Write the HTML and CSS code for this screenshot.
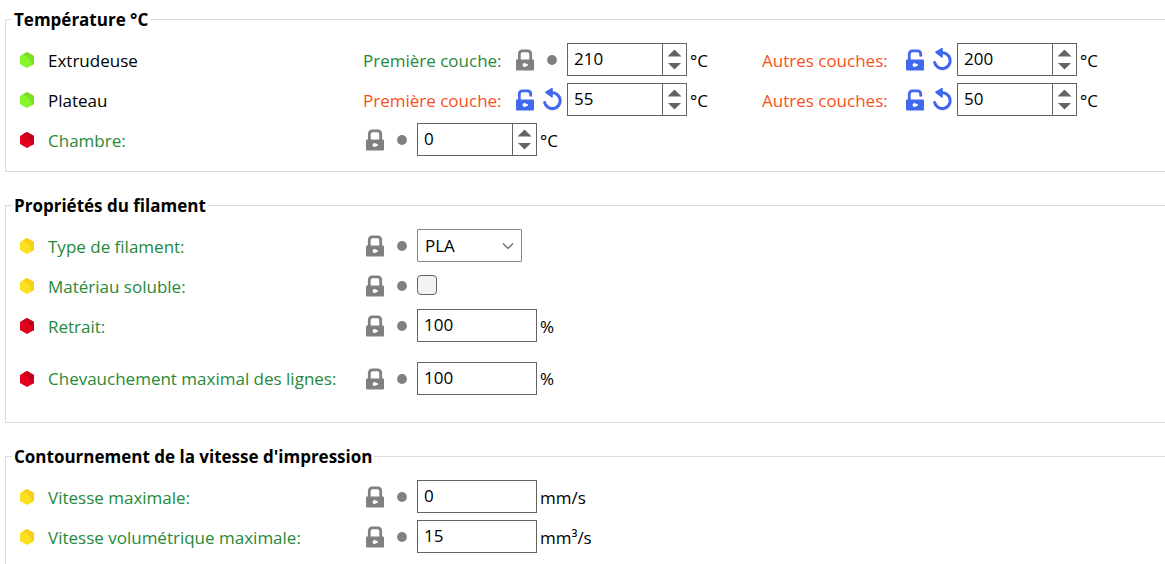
FILE: index.html
```html
<!DOCTYPE html>
<html lang="fr">
<head>
<meta charset="utf-8">
<title>Réglages du filament</title>
<link rel="stylesheet" href="styles.css">
</head>
<body>
<svg class="sprite" aria-hidden="true">
  <symbol id="hex" viewBox="0 0 14 16">
    <path class="hex-base" d="M7 0 14 4V12L7 16 0 12V4Z"/>
    <path class="hex-shade" d="M7 0 14 4V12L11.500 13.400C12 9 8 5 2.500 2.600Z"/>
  </symbol>
  <symbol id="lock" viewBox="0 0 24 24">
    <path d="M6.300 12V6Q6.300 2.900 9.400 2.900H14.600Q17.700 2.900 17.700 6V12" fill="none" stroke="currentColor" stroke-width="2.800"/>
    <rect x="3" y="11.500" width="18" height="11" rx="1" fill="currentColor"/>
    <path d="M11.500 15a2 2 0 1 0 1.300 3.600l2.200-1.100v-1l-2.200-1Z" fill="#fff"/>
  </symbol>
  <symbol id="unlock" viewBox="0 0 24 24">
    <path d="M6.300 12V6Q6.300 2.900 9.400 2.900H14.600Q17.700 2.900 17.700 6V7.400" fill="none" stroke="currentColor" stroke-width="2.800" stroke-linecap="round"/>
    <rect x="3" y="11.500" width="18" height="11" rx="1" fill="currentColor"/>
    <path d="M11.500 15a2 2 0 1 0 1.300 3.600l2.200-1.100v-1l-2.200-1Z" fill="#fff"/>
  </symbol>
  <symbol id="dot" viewBox="0 0 24 24"><circle cx="12" cy="12" r="4.900" fill="currentColor"/></symbol>
  <symbol id="undo" viewBox="0 0 24 24">
    <path d="M4.600 14.500A7.900 7.900 0 1 0 11.500 4.800" fill="none" stroke="currentColor" stroke-width="3.100" stroke-linecap="round"/>
    <path d="M6 4.300 12 .7V8.900Z" fill="currentColor" stroke="currentColor" stroke-width="1.600" stroke-linejoin="round"/>
  </symbol>
</svg>

<main class="settings">
  <fieldset class="group">
    <legend>Température °C</legend>
    <div class="row">
      <svg class="hex simple"><use href="#hex"/></svg>
      <span class="name">Extrudeuse</span>
      <div class="pair">
        <div class="field">
          <label class="sub system" for="ext-first">Première couche:</label>
          <button class="icon" type="button" aria-label="Valeur système"><svg><use href="#lock"/></svg></button>
          <button class="icon" type="button" aria-label="Valeur enregistrée"><svg><use href="#dot"/></svg></button>
          <span class="spin"><input id="ext-first" type="number" value="210"><span class="steps"><button class="up" type="button" aria-label="Augmenter"></button><button class="down" type="button" aria-label="Diminuer"></button></span></span>
          <span class="unit">°C</span>
        </div>
        <div class="field">
          <label class="sub changed" for="ext-other">Autres couches:</label>
          <button class="icon active" type="button" aria-label="Revenir à la valeur système"><svg><use href="#unlock"/></svg></button>
          <button class="icon active" type="button" aria-label="Annuler"><svg><use href="#undo"/></svg></button>
          <span class="spin"><input id="ext-other" type="number" value="200"><span class="steps"><button class="up" type="button" aria-label="Augmenter"></button><button class="down" type="button" aria-label="Diminuer"></button></span></span>
          <span class="unit">°C</span>
        </div>
      </div>
    </div>
    <div class="row">
      <svg class="hex simple"><use href="#hex"/></svg>
      <span class="name">Plateau</span>
      <div class="pair">
        <div class="field">
          <label class="sub changed" for="bed-first">Première couche:</label>
          <button class="icon active" type="button" aria-label="Revenir à la valeur système"><svg><use href="#unlock"/></svg></button>
          <button class="icon active" type="button" aria-label="Annuler"><svg><use href="#undo"/></svg></button>
          <span class="spin"><input id="bed-first" type="number" value="55"><span class="steps"><button class="up" type="button" aria-label="Augmenter"></button><button class="down" type="button" aria-label="Diminuer"></button></span></span>
          <span class="unit">°C</span>
        </div>
        <div class="field">
          <label class="sub changed" for="bed-other">Autres couches:</label>
          <button class="icon active" type="button" aria-label="Revenir à la valeur système"><svg><use href="#unlock"/></svg></button>
          <button class="icon active" type="button" aria-label="Annuler"><svg><use href="#undo"/></svg></button>
          <span class="spin"><input id="bed-other" type="number" value="50"><span class="steps"><button class="up" type="button" aria-label="Augmenter"></button><button class="down" type="button" aria-label="Diminuer"></button></span></span>
          <span class="unit">°C</span>
        </div>
      </div>
    </div>
    <div class="row">
      <svg class="hex expert"><use href="#hex"/></svg>
      <label class="name system" for="chamber">Chambre:</label>
      <div class="field">
        <button class="icon" type="button" aria-label="Valeur système"><svg><use href="#lock"/></svg></button>
        <button class="icon" type="button" aria-label="Valeur enregistrée"><svg><use href="#dot"/></svg></button>
        <span class="spin"><input id="chamber" type="number" value="0"><span class="steps"><button class="up" type="button" aria-label="Augmenter"></button><button class="down" type="button" aria-label="Diminuer"></button></span></span>
        <span class="unit">°C</span>
      </div>
    </div>
  </fieldset>

  <fieldset class="group">
    <legend>Propriétés du filament</legend>
    <div class="row">
      <svg class="hex advanced"><use href="#hex"/></svg>
      <label class="name system" for="type">Type de filament:</label>
      <div class="field">
        <button class="icon" type="button" aria-label="Valeur système"><svg><use href="#lock"/></svg></button>
        <button class="icon" type="button" aria-label="Valeur enregistrée"><svg><use href="#dot"/></svg></button>
        <span class="choice"><select id="type"><option>PLA</option></select><svg class="chevron" viewBox="0 0 12 8" aria-hidden="true"><path d="M1 1.500 6 6.500 11 1.500"/></svg></span>
      </div>
    </div>
    <div class="row">
      <svg class="hex advanced"><use href="#hex"/></svg>
      <label class="name system" for="soluble">Matériau soluble:</label>
      <div class="field">
        <button class="icon" type="button" aria-label="Valeur système"><svg><use href="#lock"/></svg></button>
        <button class="icon" type="button" aria-label="Valeur enregistrée"><svg><use href="#dot"/></svg></button>
        <input class="tick" id="soluble" type="checkbox">
      </div>
    </div>
    <div class="row">
      <svg class="hex expert"><use href="#hex"/></svg>
      <label class="name system" for="shrink">Retrait:</label>
      <div class="field">
        <button class="icon" type="button" aria-label="Valeur système"><svg><use href="#lock"/></svg></button>
        <button class="icon" type="button" aria-label="Valeur enregistrée"><svg><use href="#dot"/></svg></button>
        <input class="box" id="shrink" type="text" value="100">
        <span class="unit">%</span>
      </div>
    </div>
    <div class="row tall">
      <svg class="hex expert"><use href="#hex"/></svg>
      <label class="name system" for="overlap">Chevauchement maximal des lignes:</label>
      <div class="field">
        <button class="icon" type="button" aria-label="Valeur système"><svg><use href="#lock"/></svg></button>
        <button class="icon" type="button" aria-label="Valeur enregistrée"><svg><use href="#dot"/></svg></button>
        <input class="box" id="overlap" type="text" value="100">
        <span class="unit">%</span>
      </div>
    </div>
  </fieldset>

  <fieldset class="group">
    <legend>Contournement de la vitesse d'impression</legend>
    <div class="row">
      <svg class="hex advanced"><use href="#hex"/></svg>
      <label class="name system" for="speed">Vitesse maximale:</label>
      <div class="field">
        <button class="icon" type="button" aria-label="Valeur système"><svg><use href="#lock"/></svg></button>
        <button class="icon" type="button" aria-label="Valeur enregistrée"><svg><use href="#dot"/></svg></button>
        <input class="box" id="speed" type="text" value="0">
        <span class="unit">mm/s</span>
      </div>
    </div>
    <div class="row">
      <svg class="hex advanced"><use href="#hex"/></svg>
      <label class="name system" for="volume">Vitesse volumétrique maximale:</label>
      <div class="field">
        <button class="icon" type="button" aria-label="Valeur système"><svg><use href="#lock"/></svg></button>
        <button class="icon" type="button" aria-label="Valeur enregistrée"><svg><use href="#dot"/></svg></button>
        <input class="box" id="volume" type="text" value="15">
        <span class="unit">mm³/s</span>
      </div>
    </div>
  </fieldset>
</main>
</body>
</html>
```

FILE: styles.css
```css
* { box-sizing: border-box; }

html { overflow: hidden; }

body {
  margin: 0;
  background: #fff;
  color: #000;
  font: 17px/23px "Open Sans", "Noto Sans", sans-serif;
}

.sprite { display: none; }

.settings {
  display: flex;
  flex-direction: column;
  gap: 22px;
  padding: 8px 0 8px 5px;
}

.group {
  min-width: 0;
  margin: 0;
  padding: 9px 0 11px;
  border: 1px solid #dcdcdc;
  border-right: 0;
}

legend {
  margin-left: 6px;
  padding: 0 2px;
  font-weight: 700;
}

.row {
  display: grid;
  grid-template-columns: 28px 315px auto;
  align-items: center;
  min-height: 40px;
  padding-left: 14px;
  white-space: nowrap;
}

.row.tall { min-height: 65px; }

.hex { width: 14px; height: 16px; }
.hex-base { fill: var(--base); }
.hex-shade { fill: var(--shade); }
.simple { --base: #84f72c; --shade: #7edc28; }
.advanced { --base: #fbe01d; --shade: #f8d01b; }
.expert { --base: #e3001f; --shade: #c60018; }

.system { color: #26893a; }
.changed { color: #f94f1c; }

.pair {
  display: grid;
  grid-template-columns: 399px auto;
}

.field {
  display: flex;
  align-items: center;
  gap: 3px;
}

.sub { width: 147px; }
.field + .field .sub { width: 138px; }

button, input, select {
  margin: 0;
  border: 0;
  border-radius: 0;
  background: none;
  color: inherit;
  font: inherit;
}

.icon {
  width: 24px;
  height: 24px;
  padding: 0;
  color: #808080;
}

.icon.active { color: #4169ee; }
.icon svg { display: block; width: 24px; height: 24px; }

.spin, .box, .choice {
  width: 120px;
  height: 33px;
  margin-bottom: 1px;
  border: 1px solid #646464;
  background: #fff;
}

.box, .spin input { padding: 0 6px 2px; }

.spin { display: flex; }

.spin input {
  flex: 1;
  min-width: 0;
  appearance: textfield;
}

.spin input::-webkit-inner-spin-button { appearance: none; margin: 0; }

.steps {
  display: grid;
  grid-template-rows: 1fr 1fr;
  width: 24px;
  border-left: 1px solid #646464;
}

.steps button { display: flex; justify-content: center; padding: 0; }
.up { align-items: flex-end; }
.down { align-items: flex-start; }

.steps button::before {
  content: "";
  width: 14px;
  height: 7px;
  margin: 3px 0;
  background: #646464;
}

.up::before { clip-path: polygon(50% 0, 100% 100%, 0 100%); }
.down::before { clip-path: polygon(0 0, 100% 0, 50% 100%); }

.choice {
  display: grid;
  width: 105px;
  border-color: #868686;
  border-radius: 1px;
}

.choice select {
  grid-area: 1 / 1;
  width: 100%;
  padding: 0 24px 0 7px;
  appearance: none;
}

.chevron {
  grid-area: 1 / 1;
  place-self: center end;
  width: 12px;
  height: 8px;
  margin-right: 7px;
  pointer-events: none;
}

.chevron path { fill: none; stroke: #606060; stroke-width: 1.2; }

.tick {
  width: 20px;
  height: 20px;
  margin-bottom: 2px;
  border: 1px solid #646464;
  border-radius: 4px;
  background: #f3f3f3;
  appearance: none;
}

.tick:checked { background: #4169ee; }
```
